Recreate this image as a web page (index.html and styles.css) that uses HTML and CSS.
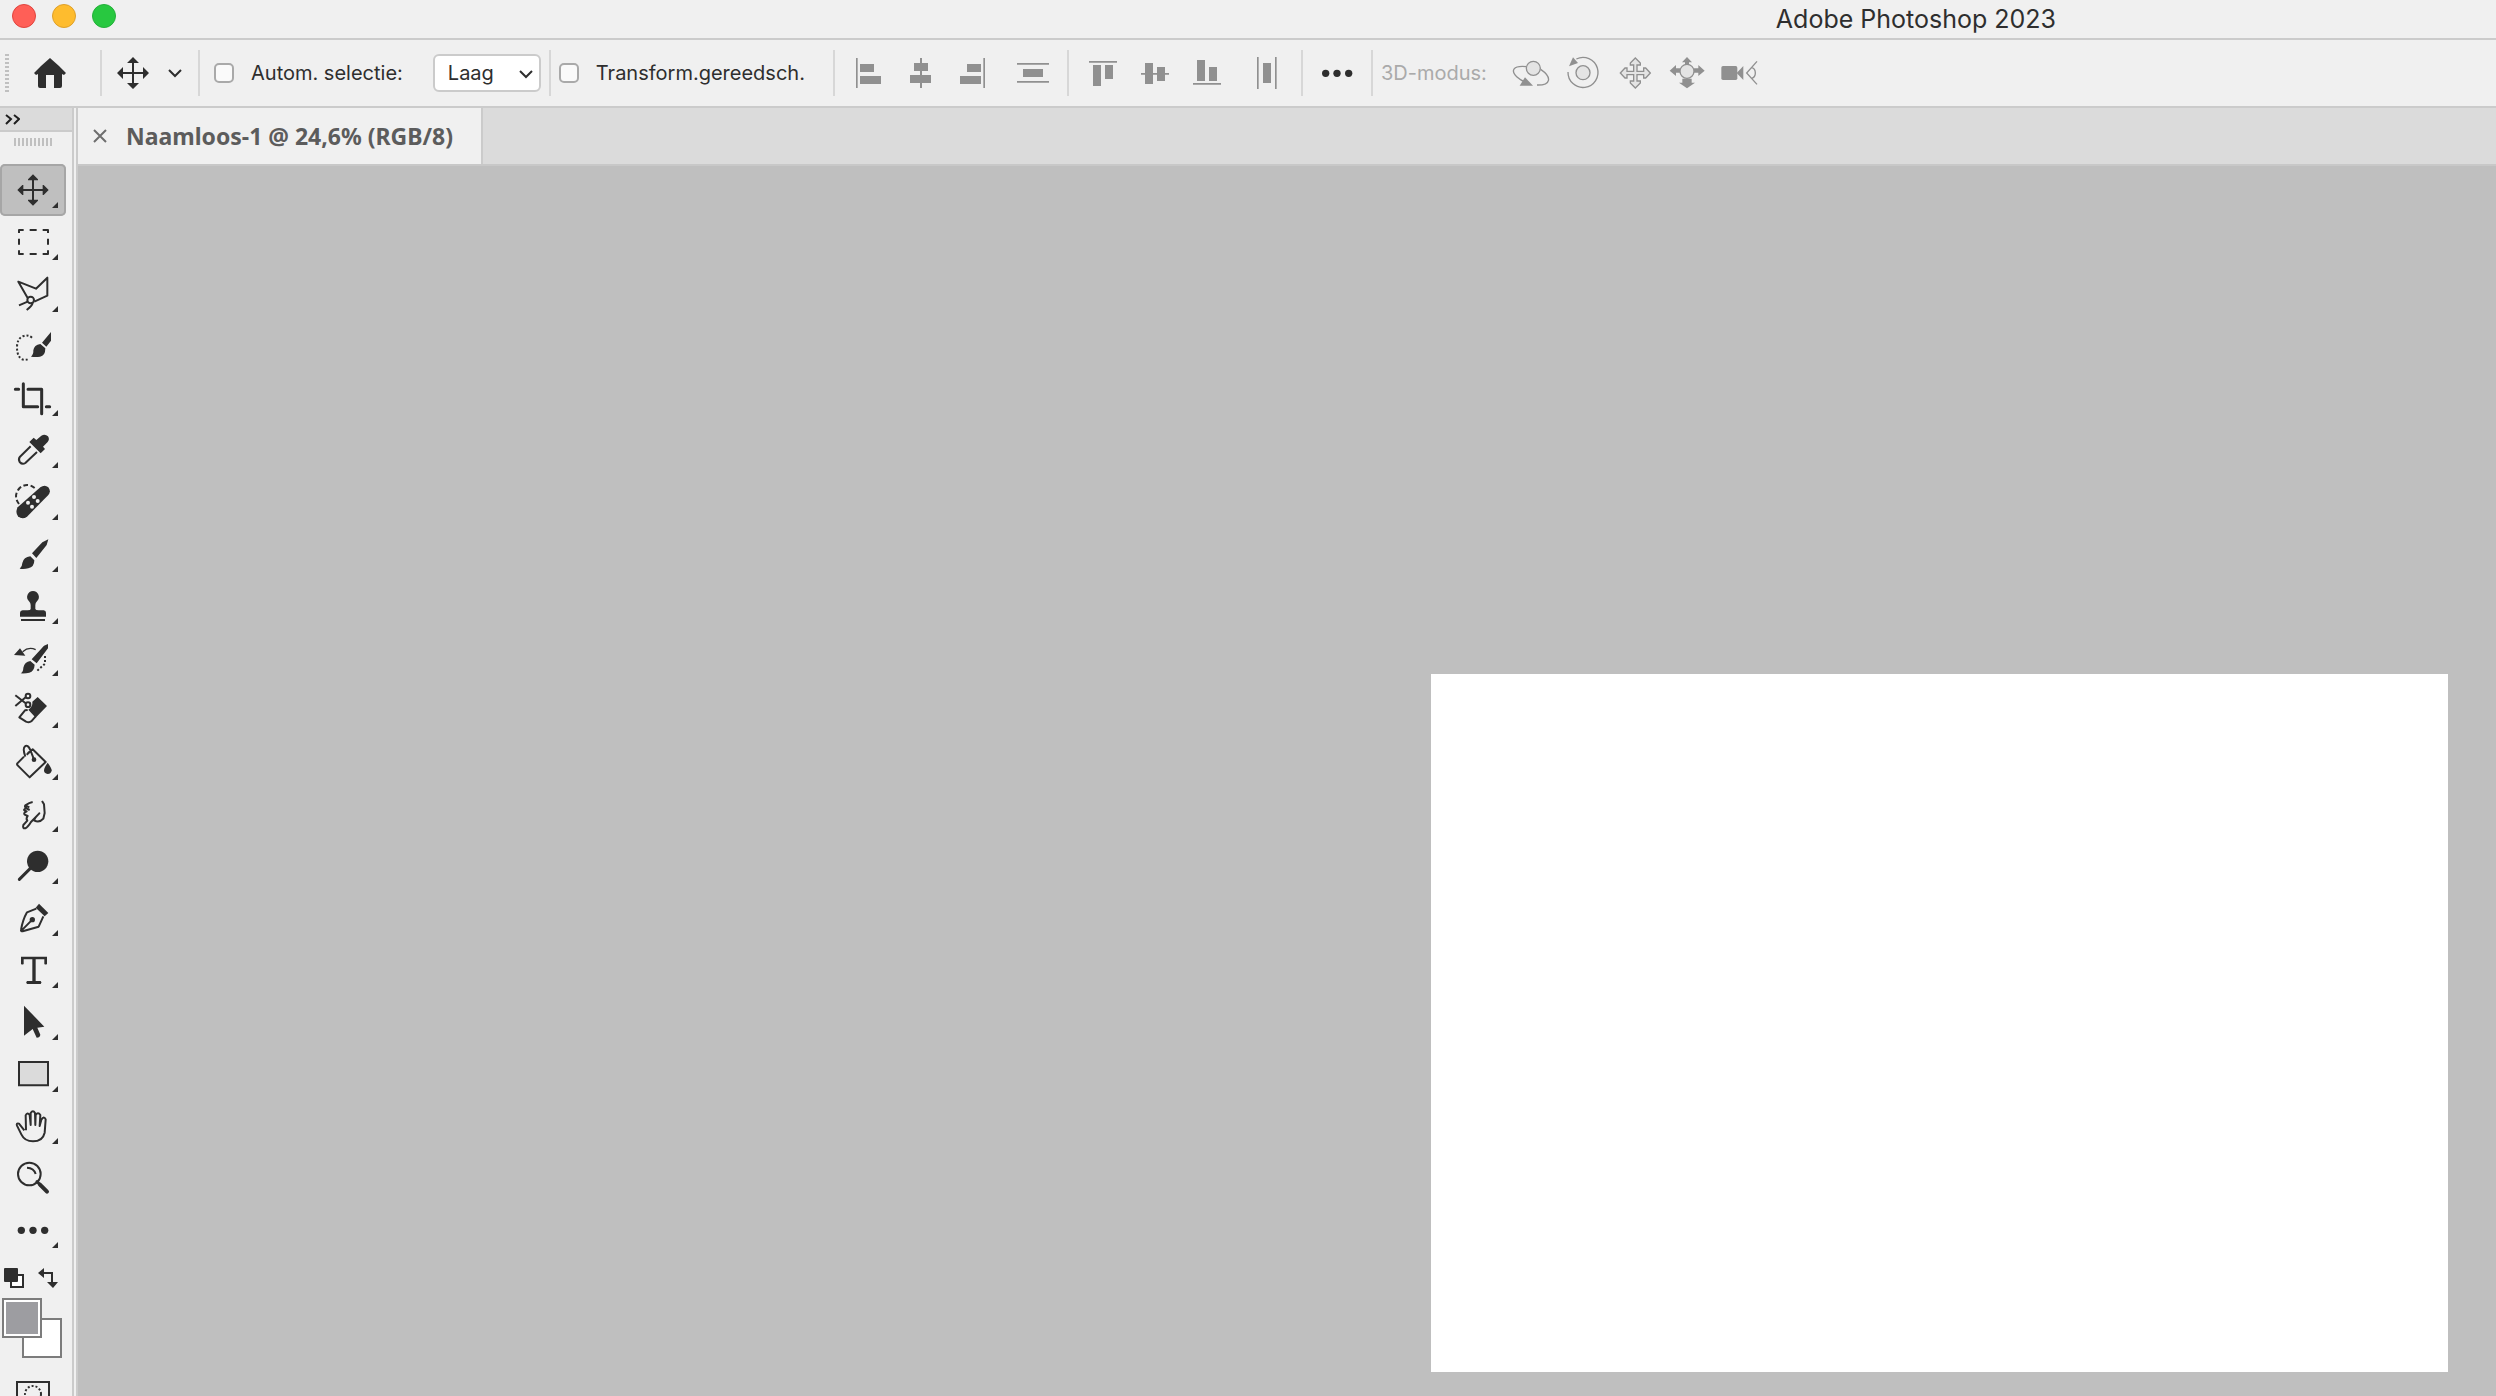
FILE: index.html
```
<!DOCTYPE html>
<html lang="nl">
<head>
    <meta charset="UTF-8">
    <meta name="viewport" content="width=device-width, initial-scale=1.0">
    <title>Adobe Photoshop 2023</title>
    <link rel="stylesheet" href="styles.css">
</head>
<body>
    <div class="app">
        <!-- title bar -->
        <header class="title-bar">
            <div class="lights">
                <button class="light red" aria-label="Sluiten"></button>
                <button class="light yellow" aria-label="Minimaliseren"></button>
                <button class="light green" aria-label="Vergroten"></button>
            </div>
            <h1 class="app-title">Adobe Photoshop 2023</h1>
        </header>

        <!-- options bar -->
        <div class="options-bar">
            <div class="group group-home">
                <span class="grip-v"></span>
                <button class="home-btn" aria-label="Start">
                    <svg viewBox="0 0 32 30" width="32" height="30"><path d="M16 0L25 8L32 15L30 17L28 16V28Q28 30 26 30H20V17H12V30H6Q4 30 4 28V16L2 17L0 15L7 8Z"/></svg>
                </button>
            </div>
            <div class="group group-move">
                <button class="preset-btn" aria-label="Verplaatsen">
                    <svg viewBox="0 0 32 32" width="32" height="32"><path d="M15 5H17V15H27V17H17V27H15V17H5V15H15Z"/><path d="M16 0L22 6H10ZM16 32L22 26H10ZM0 16L6 10V22ZM32 16L26 10V22Z"/></svg>
                    <svg class="chevron" viewBox="0 0 14 9" width="14" height="9"><path d="M1 1L7 7L13 1"/></svg>
                </button>
            </div>
            <div class="group group-select">
                <label class="check"><input type="checkbox">Autom. selectie:</label>
                <div class="select-wrap">
                    <select aria-label="Autom. selectie"><option>Laag</option><option>Groep</option></select>
                    <svg class="chevron" viewBox="0 0 14 9" width="14" height="9"><path d="M1 1L7 7L13 1"/></svg>
                </div>
            </div>
            <div class="group group-transform">
                <label class="check"><input type="checkbox">Transform.gereedsch.</label>
            </div>
            <div class="group group-icons">
                <button aria-label="Links uitlijnen"><svg viewBox="0 0 156 138"><path d="M39 24h5v90h-5zM51 42h42v24h-42zM51 78h63v24h-63z"/></svg></button>
                <button aria-label="Horizontaal centreren"><svg viewBox="0 0 156 138"><path d="M75 24h6v90h-6zM57 39h42v24h-42zM45 75h63v24h-63z"/></svg></button>
                <button aria-label="Rechts uitlijnen"><svg viewBox="0 0 156 138"><path d="M109 24h5v90h-5zM60 42h42v24h-42zM39 78h63v24h-63z"/></svg></button>
                <button class="spaced" aria-label="Verticaal verdelen"><svg viewBox="0 0 156 138"><path d="M30 39h96v5h-96zM30 93h96v5h-96zM48 57h60v24h-60z"/></svg></button>
            </div>
            <div class="group group-icons">
                <button aria-label="Boven uitlijnen"><svg viewBox="0 0 156 138"><path d="M36 33h84v5h-84zM48 45h24v63h-24zM84 45h24v42h-24z"/></svg></button>
                <button aria-label="Verticaal centreren"><svg viewBox="0 0 156 138"><path d="M36 69h84v5h-84zM48 39h24v63h-24zM84 51h24v42h-24z"/></svg></button>
                <button aria-label="Onder uitlijnen"><svg viewBox="0 0 156 138"><path d="M36 99h84v5h-84zM48 30h24v63h-24zM84 51h24v42h-24z"/></svg></button>
                <button class="spaced" aria-label="Horizontaal verdelen"><svg viewBox="0 0 156 138"><path d="M48 21h5v96h-5zM102 21h5v96h-5zM66 39h24v60h-24z"/></svg></button>
            </div>
            <div class="group group-icons dark">
                <button aria-label="Meer opties"><svg viewBox="0 0 156 138"><circle cx="44" cy="70" r="11"/><circle cx="78" cy="70" r="11"/><circle cx="113" cy="70" r="11"/></svg></button>
            </div>
            <div class="group group-icons group-3d">
                <span class="mode-label">3D-modus:</span>
                <button aria-label="3D roteren"><svg viewBox="0 0 156 138"><path class="thin" d="M64 50C24 46 16 62 36 81Q48 92 66 99M107 58C142 82 138 106 96 105"/><circle class="ball" cx="85" cy="55" r="21"/><path d="M44 107L60 82L84 107Z"/></svg></button>
                <button aria-label="3D rollen"><svg viewBox="0 0 156 138"><path class="thin" d="M33 66A45 45 0 1 0 58 27"/><circle class="ball" cx="78" cy="68" r="21"/><path d="M36 49L48 22L63 39Z"/></svg></button>
                <button aria-label="3D pannen"><svg viewBox="0 0 156 138"><path class="ball" d="M79 24L94 39V45H84V64H104V54H110L124 69L110 84H104V74H84V93H94V99L79 114L64 99V93H74V74H54V84H48L34 69L48 54H54V64H74V45H64V39Z"/></svg></button>
                <button aria-label="3D schuiven"><svg viewBox="0 0 156 138"><path d="M78 21L93 37H84V46H72V37H63ZM26 62L45 45V55H58V68H45V78ZM131 62L112 45V55H98V68H112V78ZM64 86H92V98H102L78 115L54 98H64Z"/><circle class="ball" cx="78" cy="64" r="21"/></svg></button>
                <button aria-label="3D zoomen"><svg viewBox="0 0 156 138"><rect x="25" y="48" width="48" height="42" rx="5"/><path d="M71 69L91 48V90Z"/><path class="thin" d="M132 34L101 69L132 103M116 53Q127 56 127 69Q127 82 116 85"/></svg></button>
            </div>
        </div>

        <div class="main">
            <!-- tool bar -->
            <aside class="tool-panel">
                <button class="panel-head" aria-label="Uitvouwen">
                    <svg viewBox="0 0 15 11" width="15" height="11"><path d="M1 1L6 5L1 10M9 1L14 5L9 10"/></svg>
                </button>
                <div class="grip-row"><span class="grip-h"></span></div>
                <nav class="tools">
                    <button class="tool active more" aria-label="Verplaatsen"><svg viewBox="0 0 198 156"><path d="M96 44h6v31h31v6h-31v31h-6v-31h-31v-6h31z"/><path d="M99 31L114 46V49H84V46ZM99 125L114 110V107H84V110ZM52 78L67 63H70V93H67ZM146 78L131 63H128V93H131Z"/></svg></button>
                    <button class="tool more" aria-label="Rechthoekig selectiekader"><svg viewBox="0 0 198 156"><path class="line" d="M57 51V42H71M89 42H110M128 42H144V51M144 68V86M144 103V114H128M110 114H89M71 114H57V103M57 86V68"/></svg></button>
                    <button class="tool more" aria-label="Veelhoeklasso"><svg viewBox="0 0 198 156"><path class="line" d="M83 90L55 41L108 62L142 29V83L103 101"/><circle class="line" cx="92" cy="96" r="10"/><path class="line" d="M83 101L57 112M98 105Q96 114 80 126"/></svg></button>
                    <button class="tool" aria-label="Snelle selectie"><svg viewBox="0 0 198 156"><path class="line dots" d="M96 53Q84 43 71 48Q51 55 51 82Q51 113 70 119Q80 121 88 115"/><path d="M153 36V62L139 80L126 68ZM121 72L136 85Q136 108 120 110Q107 112 93 110Q101 103 100 91Q102 75 121 72Z"/></svg></button>
                    <button class="tool more" aria-label="Uitsnijden"><svg viewBox="0 0 198 156"><path class="line heavy" d="M46 52H56M70 35V104H113M84 52H125V125M139 104H149"/></svg></button>
                    <button class="tool more" aria-label="Pipet"><svg viewBox="0 0 198 156"><path class="line" d="M92 67L60 98Q54 106 59 114Q67 123 76 117L111 84"/><path d="M101 41L109 48L124 35Q135 28 144 37Q150 46 143 54L129 68L135 75L122 88L88 54Z"/></svg></button>
                    <button class="tool more" aria-label="Retoucheerpenseel"><svg viewBox="0 0 198 156"><path class="line dashed" d="M104 36Q81 18 59 36Q38 59 57 84"/><path d="M53 94L121 34Q134 24 145 34Q154 46 145 57L81 122Q67 132 54 121Q45 109 53 94Z"/><g class="holes"><circle cx="102" cy="63" r="6"/><circle cx="84" cy="80" r="6"/><circle cx="113" cy="75" r="6"/><circle cx="96" cy="92" r="6"/></g></svg></button>
                    <button class="tool more" aria-label="Penseel"><svg viewBox="0 0 198 156"><path d="M145 34L140 51L109 90L96 76L127 43ZM91 85L103 97Q103 117 85 121Q72 124 59 122Q67 116 67 105Q71 87 91 85Z"/></svg></button>
                    <button class="tool more" aria-label="Kloonstempel"><svg viewBox="0 0 198 156"><path d="M99 33A18 18 0 0 1 111 64Q106 69 106 75V87Q107 91 116 91H131Q138 92 138 98V110H60V98Q60 92 68 91H83Q92 91 92 87V75Q92 69 87 64A18 18 0 0 1 99 33ZM63 117H135V123H63Z"/></svg></button>
                    <button class="tool more" aria-label="Historiepenseel"><svg viewBox="0 0 198 156"><path d="M144 36V49L110 94L95 82L132 41ZM91 87L104 98Q103 117 88 122Q76 125 62 124Q70 119 70 107Q74 89 91 87ZM42 69L60 49L76 71Z"/><path class="line thin" d="M68 59Q86 43 107 53"/><path class="line dots" d="M135 72V95L112 116"/></svg></button>
                    <button class="tool more" aria-label="Gummetje"><svg viewBox="0 0 198 156"><path d="M113 39L141 66L107 101L85 77Q99 67 97 53Z"/><path class="line" d="M107 97L94 112Q88 117 78 113L58 100L75 79L83 78M46 34L77 58M46 66L77 40"/><circle class="line" cx="84" cy="36" r="7"/><circle class="line" cx="84" cy="62" r="7"/></svg></button>
                    <button class="tool more" aria-label="Emmertje"><svg viewBox="0 0 198 156"><path class="line" d="M72 62L52 82Q50 85 53 88L89 124L137 78L98 40L83 52M76 62Q67 37 75 31Q83 24 91 42L101 68M80 56L92 45"/><circle cx="102" cy="71" r="7"/><path d="M143 80Q155 96 155 103Q154 114 143 114Q132 113 132 103Q132 95 143 80Z"/></svg></button>
                    <button class="tool more" aria-label="Natte vinger"><svg viewBox="0 0 198 156"><path class="line" d="M98 42Q88 44 76 52Q73 56 79 61Q70 64 73 67L80 70Q69 75 74 80L83 84Q77 92 82 98L70 111Q67 122 76 121Q84 117 93 102L118 76Q102 92 103 98Q119 105 130 92L134 75L132 49L126 39M76 52L88 58M79 61L89 66"/></svg></button>
                    <button class="tool more" aria-label="Tegenhouden"><svg viewBox="0 0 198 156"><circle cx="113" cy="64" r="32"/><path class="line heavy" d="M91 85L58 118"/></svg></button>
                    <button class="tool more" aria-label="Pen"><svg viewBox="0 0 198 156"><path d="M117 35L145 63L134 73L107 47Z"/><path class="line" d="M109 50L81 61Q68 84 63 114Q62 118 68 118L116 104L130 73M65 115L94 86"/><circle cx="97" cy="83" r="8"/></svg></button>
                    <button class="tool more" aria-label="Horizontale tekst"><svg viewBox="0 0 198 156"><path d="M63 38H141V60Q137 63 133 60V46H107V111H122Q127 115 122 120H81Q76 115 81 111H97V46H71V60Q67 63 63 60Z"/></svg></button>
                    <button class="tool more" aria-label="Padselectie"><svg viewBox="0 0 198 156"><path d="M72 29L133 92L112 95L121 116Q120 125 110 125L98 99L72 119Z"/></svg></button>
                    <button class="tool more" aria-label="Rechthoek"><svg viewBox="0 0 198 156"><path class="line fill-grey" d="M57 42H144V112H57Z"/></svg></button>
                    <button class="tool more" aria-label="Handje"><svg viewBox="0 0 198 156"><path class="line" d="M73 91L57 71Q48 68 51 77Q58 91 64 103Q74 124 99 124Q128 124 134 98L137 58Q132 46 124 59L119 78L121 45Q114 34 107 45L106 75L105 39Q99 28 92 39V75L89 45Q82 36 77 46L78 91"/></svg></button>
                    <button class="tool" aria-label="Zoomen"><svg viewBox="0 0 198 156"><circle class="line" cx="88" cy="66" r="34"/><path class="line" d="M81 47Q102 48 107 66"/><path class="line heavy" d="M111 89L121 99"/><path class="line handle" d="M120 98L141 119"/></svg></button>
                    <button class="tool more" aria-label="Werkbalk bewerken"><svg viewBox="0 0 198 156"><circle cx="64" cy="79" r="11"/><circle cx="99" cy="79" r="11"/><circle cx="134" cy="79" r="11"/></svg></button>
                </nav>
                <div class="swatch-actions">
                    <button aria-label="Standaardkleuren"><svg viewBox="0 0 20 20" width="20" height="20"><path class="page" d="M7 7H19V19H7Z"/><rect width="14" height="14" rx="1"/></svg></button>
                    <button aria-label="Kleuren wisselen"><svg viewBox="0 0 20 20" width="20" height="20"><path d="M0 5L6 0V4H15V14H20L15 20L9 14H13V6H6V10Z"/></svg></button>
                </div>
                <div class="swatches">
                    <button class="swatch background" aria-label="Achtergrondkleur"></button>
                    <button class="swatch foreground" aria-label="Voorgrondkleur"></button>
                </div>
                <button class="mask-btn" aria-label="Snelmasker">
                    <svg viewBox="0 0 34 28" width="34" height="28"><path d="M1 1H33V27H1Z"/><circle cx="17" cy="13" r="8"/></svg>
                </button>
            </aside>

            <!-- document -->
            <main class="document">
                <div class="tabs">
                    <div class="tab">
                        <button class="close-btn" aria-label="Tabblad sluiten"><svg viewBox="0 0 14 14" width="14" height="14"><path d="M1 1L13 13M13 1L1 13"/></svg></button>
                        <span>Naamloos-1 @ 24,6% (RGB/8)</span>
                    </div>
                </div>
                <div class="workspace">
                    <div class="artboard"></div>
                </div>
            </main>
        </div>
    </div>
</body>
</html>
```
FILE: styles.css
```
* {
    margin: 0;
    padding: 0;
    box-sizing: border-box;
}
body {
    background: #f0f0f0;
    color: #2e2e2e;
    font-family: Inter, "Liberation Sans", sans-serif;
    font-size: 20px;
    overflow: hidden;
}
button {
    border: none;
    background: transparent;
    color: inherit;
}
svg {
    display: block;
    fill: currentColor;
}
.app {
    height: 100vh;
    display: flex;
    flex-direction: column;
}

/* title bar */
.title-bar {
    display: flex;
    align-items: center;
    height: 40px;
    padding: 0 440px 6px 12px;
    border-bottom: 2px solid #cbcbcb;
}
.lights {
    display: flex;
    gap: 16px;
}
.light {
    width: 24px;
    height: 24px;
    border-radius: 50%;
    border: 1px solid #e0443e;
}
.red {
    background: #ff5f57;
}
.yellow {
    background: #febc2e;
    border-color: #dea02a;
}
.green {
    background: #28c840;
    border-color: #24b03a;
}
.app-title {
    margin-left: auto;
    padding-top: 5px;
    font-size: 25px;
    line-height: 28px;
    font-weight: 400;
}

/* options bar */
.options-bar {
    display: flex;
    align-items: center;
    height: 68px;
    border-bottom: 2px solid #cbcbcb;
}
.group {
    display: flex;
    align-items: center;
    height: 46px;
    border-right: 2px solid #d7d7d7;
}
.group-home {
    padding: 0 34px 0 5px;
    gap: 25px;
}
.grip-v {
    width: 4px;
    height: 38px;
    background: repeating-linear-gradient(#c0c0c0 0 2px, transparent 2px 4px);
}
.group-move {
    padding: 0 16px 0 15px;
}
.preset-btn {
    display: flex;
    align-items: center;
    gap: 19px;
}
.chevron {
    fill: none;
    stroke: #2e2e2e;
    stroke-width: 2;
}
.group-select {
    padding: 0 8px 0 14px;
    gap: 30px;
}
.check {
    display: flex;
    align-items: center;
    gap: 17px;
    line-height: 28px;
}
.check input {
    appearance: none;
    width: 20px;
    height: 20px;
    border: 2px solid #a9a9a9;
    border-radius: 5px;
    background: #fafafa;
}
.select-wrap {
    position: relative;
}
.select-wrap select {
    appearance: none;
    width: 108px;
    height: 38px;
    padding: 0 13px;
    border: 2px solid #cbcbcb;
    border-radius: 6px;
    background: #fff;
    color: inherit;
    font: inherit;
}
.select-wrap .chevron {
    position: absolute;
    top: 16px;
    right: 8px;
    pointer-events: none;
}
.group-transform {
    padding: 0 28px 0 8px;
}
.group-icons {
    padding: 0 8px;
    color: #909090;
}
.group-icons button,
.group-icons svg {
    width: 52px;
    height: 46px;
}
.group-icons .spaced {
    margin-left: 8px;
}
.group-icons.dark {
    color: #2e2e2e;
}
.group-3d {
    border-right: none;
}
.mode-label {
    margin-right: 18px;
    color: #aaa;
}
.thin {
    fill: none;
    stroke: currentColor;
    stroke-width: 4;
}
.ball {
    fill: #e4e4e4;
    stroke: currentColor;
    stroke-width: 4;
}

/* tool bar */
.main {
    display: flex;
    flex: 1;
    min-height: 0;
}
.tool-panel {
    width: 74px;
    border-right: 2px solid #cbcbcb;
    overflow: hidden;
    flex-shrink: 0;
}
.panel-head {
    display: flex;
    align-items: center;
    width: 100%;
    height: 24px;
    padding-left: 5px;
    background: #dbdbdb;
    border-bottom: 2px solid #cbcbcb;
}
.panel-head svg {
    fill: none;
    stroke: #1e1e1e;
    stroke-width: 2;
}
.grip-row {
    height: 32px;
    padding: 6px 14px;
}
.grip-h {
    display: block;
    width: 38px;
    height: 8px;
    background: repeating-linear-gradient(90deg, #c0c0c0 0 2px, transparent 2px 4px);
}
.tools {
    display: flex;
    flex-direction: column;
}
.tool {
    position: relative;
    width: 66px;
    height: 52px;
}
.tool svg {
    width: 66px;
    height: 52px;
}
.tool.active {
    background: #bfbfbf;
    border-radius: 5px;
    box-shadow: inset 0 0 0 2px #a6a6a6;
}
/* corner mark for tools with a flyout */
.more::after {
    content: "";
    position: absolute;
    right: 8px;
    bottom: 8px;
    border-left: 6px solid transparent;
    border-bottom: 6px solid #2e2e2e;
}
.line {
    fill: none;
    stroke: currentColor;
    stroke-width: 6;
    stroke-linejoin: round;
}
.line.thin {
    stroke-width: 4;
}
.line.heavy {
    stroke-width: 9;
    stroke-linecap: round;
}
.line.handle {
    stroke-width: 12;
    stroke-linecap: round;
}
.line.dots {
    stroke-dasharray: 6 6;
}
.line.dashed {
    stroke-dasharray: 14 8;
}
.line.fill-grey {
    fill: #dbdbdb;
    stroke-linejoin: miter;
}
.holes {
    fill: #f0f0f0;
}
.swatch-actions {
    display: flex;
    gap: 14px;
    height: 42px;
    padding: 12px 4px;
}
.swatch-actions .page {
    fill: #fff;
    stroke: #2e2e2e;
    stroke-width: 2;
}
.swatches {
    position: relative;
    height: 60px;
    margin-left: 2px;
}
.swatch {
    position: absolute;
    width: 40px;
    height: 40px;
    border: 2px solid #7c7c7c;
    background: #fff;
}
.background {
    top: 20px;
    left: 20px;
}
.foreground {
    top: 0;
    left: 0;
    background: #9d9da1;
    box-shadow: inset 0 0 0 2px #fff;
}
.mask-btn {
    margin: 23px 16px 0;
}
.mask-btn svg {
    fill: none;
    stroke: #2e2e2e;
    stroke-width: 2;
}
.mask-btn circle {
    stroke-dasharray: 2 2;
}

/* document */
.document {
    display: flex;
    flex-direction: column;
    flex: 1;
    margin-left: 2px;
    border-left: 2px solid #cbcbcb;
}
.tabs {
    display: flex;
    background: #dbdbdb;
    border-bottom: 2px solid #c8c8c8;
}
.tab {
    display: flex;
    align-items: center;
    gap: 19px;
    height: 56px;
    padding: 0 28px 0 15px;
    background: #f0f0f0;
    border-right: 2px solid #cbcbcb;
    color: #5c5c5c;
    font-family: "Noto Sans", "Open Sans", sans-serif;
    font-size: 23px;
    font-weight: 700;
}
.close-btn svg {
    fill: none;
    stroke: #6e6e6e;
    stroke-width: 2;
}
.workspace {
    display: flex;
    justify-content: flex-end;
    align-items: flex-end;
    flex: 1;
    padding: 0 48px 24px 0;
    background: #bfbfbf;
}
.artboard {
    width: 1017px;
    height: 698px;
    background: #fff;
}
```
